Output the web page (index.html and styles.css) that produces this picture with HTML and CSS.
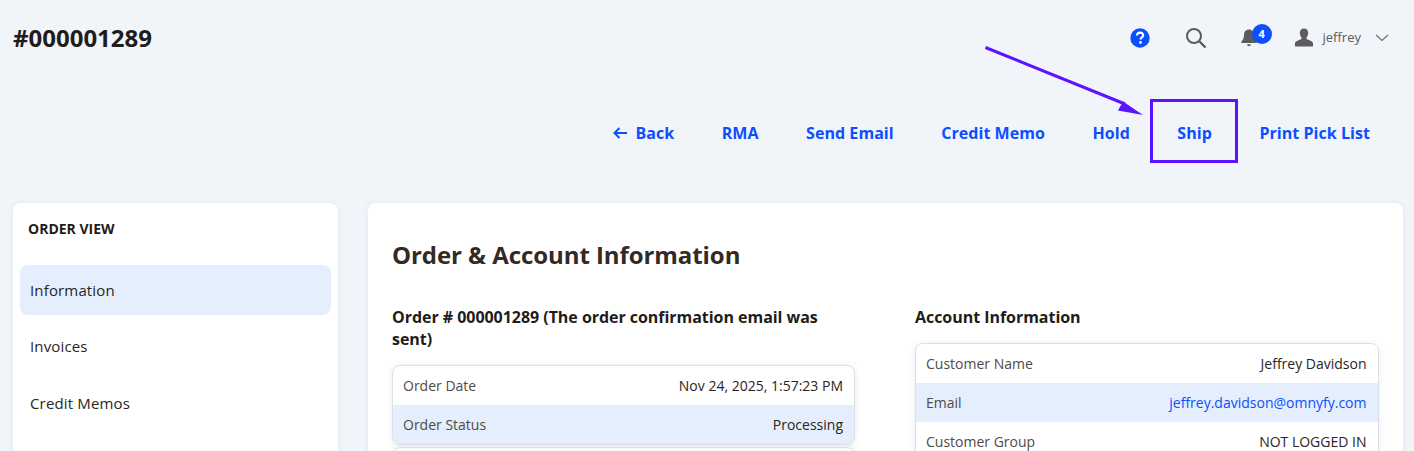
FILE: index.html

```html
<!DOCTYPE html>
<html lang="en">
<head>
  <meta charset="UTF-8">
  <title>#000001289</title>
  <link rel="stylesheet" href="styles.css">
</head>
<body>
  <header class="topbar">
    <h1 class="page-title">#000001289</h1>
    <div class="tools">
      <svg class="tool-help" width="20" height="20" viewBox="0 0 20 20">
        <circle cx="10" cy="10" r="9.7" fill="#0b4fff"/>
        <path d="M6.9 7.6c0-1.9 1.4-3 3.2-3 1.800 0 3.100 1 3.100 2.600 0 1.300-.8 1.900-1.600 2.500-.7.5-1 .8-1 1.700" fill="none" stroke="#fff" stroke-width="2.100"/>
        <circle cx="10.500" cy="14.500" r="1.400" fill="#fff"/>
      </svg>
      <svg class="tool-search" width="22" height="22" viewBox="0 0 22 22">
        <circle cx="9" cy="9" r="7" fill="none" stroke="#5c5c5c" stroke-width="2"/>
        <path d="M14 14l6.500 6.500" stroke="#5c5c5c" stroke-width="2.400"/>
      </svg>
      <div class="bell">
        <svg width="16" height="18" viewBox="0 0 16 18">
          <path d="M8 0.500c-3.200 0-5 2.300-5 5.300 0 3.400-1 5.200-2.600 6.700v1.500h15.200v-1.500c-1.600-1.500-2.600-3.300-2.600-6.700 0-3-1.800-5.300-5-5.300z" fill="#5c5c5c"/>
          <path d="M6.200 15.200h3.600c0 1.200-.8 2-1.800 2s-1.800-.8-1.800-2z" fill="#5c5c5c"/>
        </svg>
        <span class="badge">4</span>
      </div>
      <div class="user">
        <svg width="20" height="20" viewBox="0 0 20 20">
          <path d="M10 0.500c-2.800 0-4.200 2-4.200 4.500 0 1.900.7 3.400 1.700 4.400v1.500c-2.500 1-6 2-6.500 4.100v3.500h18v-3.500c-.5-2.100-4-3.100-6.500-4.100v-1.500c1-1 1.700-2.500 1.700-4.400 0-2.500-1.400-4.500-4.200-4.500z" fill="#5c5c5c"/>
        </svg>
        <span class="user-name">jeffrey</span>
        <svg width="14" height="8" viewBox="0 0 14 8">
          <path d="M1 1l6 5.500 6-5.500" fill="none" stroke="#6b6b6b" stroke-width="1.100"/>
        </svg>
      </div>
    </div>
  </header>

  <nav class="actions">
    <a href="#" class="action">
      <svg class="back-arrow" width="15" height="12" viewBox="0 0 15 12">
        <path d="M14 6H2M6.500 1L1.500 6l5 5" fill="none" stroke="#0b4fff" stroke-width="2"/>
      </svg>
      Back
    </a>
    <a href="#" class="action">RMA</a>
    <a href="#" class="action">Send Email</a>
    <a href="#" class="action">Credit Memo</a>
    <a href="#" class="action">Hold</a>
    <a href="#" class="action">Ship</a>
    <a href="#" class="action">Print Pick List</a>
  </nav>

  <div class="layout">
    <aside class="sidebar">
      <h2 class="sidebar-title">ORDER VIEW</h2>
      <ul class="side-menu">
        <li class="side-item active">Information</li>
        <li class="side-item">Invoices</li>
        <li class="side-item">Credit Memos</li>
      </ul>
    </aside>

    <main class="panel">
      <h2 class="panel-title">Order &amp; Account Information</h2>
      <div class="columns">
        <section>
          <h3 class="block-title">Order # 000001289 (The order confirmation email was sent)</h3>
          <div class="info-table">
            <div class="info-row"><span class="info-label">Order Date</span><span>Nov 24, 2025, 1:57:23 PM</span></div>
            <div class="info-row alt"><span class="info-label">Order Status</span><span>Processing</span></div>
          </div>
          <div class="info-table">
            <div class="info-row"></div>
          </div>
        </section>
        <section>
          <h3 class="block-title">Account Information</h3>
          <div class="info-table">
            <div class="info-row"><span class="info-label">Customer Name</span><span>Jeffrey Davidson</span></div>
            <div class="info-row alt"><span class="info-label">Email</span><a href="#" class="info-link">jeffrey.davidson@omnyfy.com</a></div>
            <div class="info-row"><span class="info-label">Customer Group</span><span>NOT LOGGED IN</span></div>
          </div>
        </section>
      </div>
    </main>
  </div>

  <svg class="annotation" width="1414" height="451" viewBox="0 0 1414 451">
    <rect x="1151.500" y="100.500" width="85" height="61" fill="none" stroke="#5a14ff" stroke-width="3"/>
    <path d="M985.500 47.500L1125 104" stroke="#5a14ff" stroke-width="3" fill="none"/>
    <path d="M1143 115L1118 110.500L1123 101.500z" fill="#5a14ff"/>
  </svg>
</body>
</html>
```

FILE: styles.css

```css
html {
  height: 100%;
  overflow: hidden;
}
body {
  margin: 0;
  background: #f1f4f9;
  color: #2b2522;
  font-family: "Open Sans", "Noto Sans", sans-serif;
  font-size: 14px;
}
.topbar {
  display: flex;
  justify-content: space-between;
  align-items: center;
  height: 76px;
  padding: 0 25px 0 13px;
}
.page-title {
  margin: 0 0 2px;
  font-size: 24px;
  font-weight: 700;
  color: #1f1c1a;
}
.tools {
  display: flex;
  align-items: center;
}
.tool-search {
  margin-left: 35px;
}
.bell {
  position: relative;
  display: flex;
  margin-left: 34px;
}
.badge {
  position: absolute;
  top: -5px;
  left: 11px;
  width: 20px;
  height: 20px;
  border-radius: 50%;
  background: #0b4fff;
  color: #fff;
  font-size: 11px;
  font-weight: 700;
  line-height: 20px;
  text-align: center;
}
.user {
  display: flex;
  align-items: center;
  margin-left: 37px;
  color: #5c5c5c;
}
.user-name {
  margin: 0 14px 2px 9px;
  font-size: 13px;
}
.actions {
  display: flex;
  justify-content: flex-end;
  align-items: center;
  gap: 47.500px;
  height: 114px;
  padding-right: 44px;
}
.action {
  color: #0b4fff;
  font-size: 16px;
  font-weight: 700;
  letter-spacing: 0.050px;
  text-decoration: none;
  white-space: nowrap;
}
.back-arrow {
  margin-right: 3px;
}
.layout {
  display: flex;
  align-items: flex-start;
  gap: 30px;
  padding: 13px 12px 0 13px;
}
.sidebar {
  flex: 0 0 325px;
  height: 400px;
  box-sizing: border-box;
  padding: 0 7px;
  background: #fff;
  border-radius: 8px;
  box-shadow: 0 0 6px rgba(60, 80, 120, 0.08);
}
.sidebar-title {
  margin: 0;
  padding: 16px 8px 26px;
  font-size: 14px;
  font-weight: 700;
  line-height: 20px;
  color: #1f1c1a;
}
.side-menu {
  margin: 0;
  padding: 0;
  list-style: none;
}
.side-item {
  height: 50px;
  margin-bottom: 6.400px;
  padding-left: 10px;
  border-radius: 8px;
  font-size: 15px;
  letter-spacing: 0.150px;
  line-height: 50px;
}
.side-item.active {
  background: #e4eefc;
}
.panel {
  flex: 1;
  height: 500px;
  box-sizing: border-box;
  padding: 0 24px;
  background: #fff;
  border-radius: 8px;
  box-shadow: 0 0 6px rgba(60, 80, 120, 0.08);
}
.panel-title {
  margin: 0;
  padding: 34px 0 33px;
  font-size: 24px;
  font-weight: 700;
  letter-spacing: -0.070px;
  line-height: 36px;
  color: #322a24;
}
.columns {
  display: grid;
  grid-template-columns: 463px 463.500px;
  gap: 60px;
}
.block-title {
  margin: 0 0 15px;
  font-size: 16px;
  font-weight: 700;
  letter-spacing: -0.040px;
  line-height: 22px;
  color: #1f1c1a;
}
.info-table {
  margin-bottom: 2px;
  border: 1px solid #dcdfe8;
  border-radius: 8px;
  overflow: hidden;
  box-shadow: 0 1px 6px rgba(60, 80, 120, 0.12);
}
.info-row {
  display: flex;
  justify-content: space-between;
  align-items: center;
  height: 39px;
  padding: 0 11px 0 10px;
  font-size: 14px;
}
.info-row.alt {
  background: #e4eefc;
}
.info-label {
  color: #524a44;
}
.info-link {
  color: #0b4fff;
  text-decoration: none;
}
.annotation {
  position: absolute;
  top: 0;
  left: 0;
  pointer-events: none;
}
```
